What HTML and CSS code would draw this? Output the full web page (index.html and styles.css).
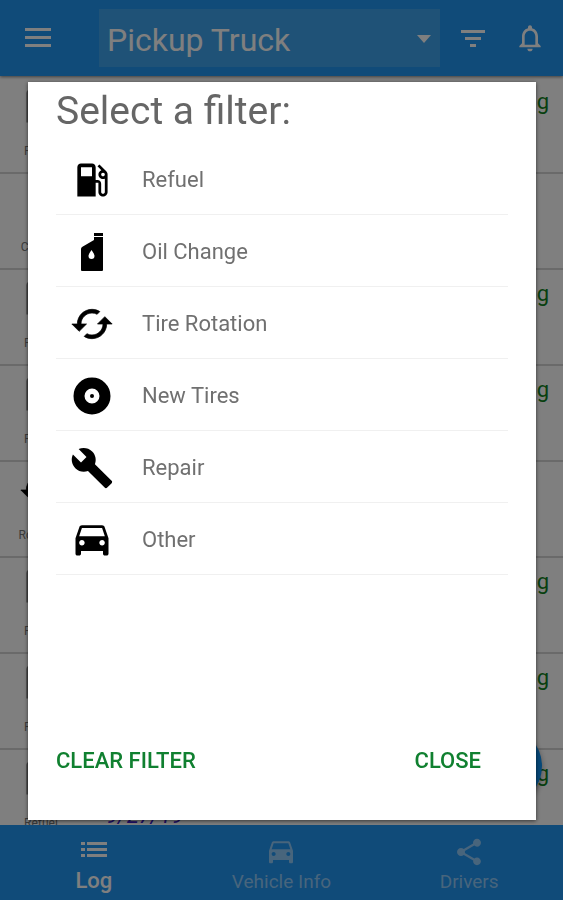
FILE: index.html
```
<!doctype html>
<html lang="en">
<head>
    <meta charset="utf-8">
    <meta name="viewport" content="width=device-width, initial-scale=1">
    <title>Pickup Truck</title>
    <link rel="stylesheet" href="styles.css">
</head>

<body>
    <!-- shared icon shapes -->
    <svg class="sprite" aria-hidden="true">
      <symbol id="icon-car" viewBox="0 0 24 24">
        <path d="M18.920 5.010C18.720 4.420 18.160 4 17.500 4h-11c-.66 0-1.210.42-1.420 1.010L3 11v8.500c0 .55.45 1 1 1h1c.55 0 1-.45 1-1V18h12v1.500c0 .55.45 1 1 1h1c.55 0 1-.45 1-1V11l-2.080-5.990zM6.500 15c-.83 0-1.500-.67-1.500-1.500S5.670 12 6.500 12s1.500.67 1.500 1.500S7.330 15 6.500 15zm11 0c-.83 0-1.500-.67-1.500-1.500s.67-1.500 1.500-1.500 1.500.67 1.500 1.500-.67 1.500-1.500 1.500zM5 10l1.500-4.500h11L19 10H5z"/>
      </symbol>
      <symbol id="icon-gas" viewBox="0 0 24 24">
        <path d="M19.770 7.230l.01-.01-3.720-3.720L15 4.560l2.110 2.110c-.94.36-1.610 1.260-1.610 2.330 0 1.380 1.120 2.500 2.500 2.500.36 0 .69-.08 1-.21v7.210c0 .55-.45 1-1 1s-1-.45-1-1V14c0-1.100-.9-2-2-2h-1V5c0-1.100-.9-2-2-2H6c-1.100 0-2 .9-2 2v16h10v-7.500h1.500v5c0 1.380 1.120 2.500 2.500 2.500s2.500-1.120 2.500-2.500V9c0-.69-.28-1.320-.73-1.770zM12 10H6V5h6v5zm6 0c-.55 0-1-.45-1-1s.45-1 1-1 1 .45 1 1-.45 1-1 1z"/>
      </symbol>
      <symbol id="icon-oil" viewBox="0 0 44 44">
        <path fill-rule="evenodd" d="M24 3h9v3h-9zM24 7h9v33q0 1-1 1H12q-1 0-1-1V19q0-1 1-2l12-7zM21.500 20q-3 4-3 6a3 3 0 0 0 6 0q0-2-3-6z"/>
      </symbol>
      <symbol id="icon-rotate" viewBox="0 0 24 24">
        <path stroke="currentColor" stroke-width=".4" stroke-linejoin="round" d="M19 8l-4 4h3c0 3.310-2.690 6-6 6-1.010 0-1.970-.25-2.800-.7l-1.460 1.460C8.970 19.540 10.430 20 12 20c4.420 0 8-3.580 8-8h3l-4-4zM6 12c0-3.310 2.690-6 6-6 1.010 0 1.970.25 2.800.7l1.460-1.460C15.030 4.460 13.570 4 12 4c-4.420 0-8 3.580-8 8H1l4 4 4-4H6z"/>
      </symbol>
    </svg>

    <div class="app">
      <header class="toolbar">
        <button class="icon-btn menu" aria-label="Menu">
          <svg width="26" height="20" viewBox="0 0 26 20"><path d="M0 0h26v3H0zM0 8h26v3H0zM0 16h26v3H0z"/></svg>
        </button>
        <div class="vehicle">
          <select aria-label="Vehicle">
            <option>Pickup Truck</option>
          </select>
          <svg class="caret" width="14" height="8" viewBox="0 0 14 8"><path d="M0 0h14L7 8z"/></svg>
        </div>
        <button class="icon-btn" aria-label="Filter">
          <svg width="24" height="18" viewBox="0 0 24 18"><path d="M0 1h24v3H0zM4 8h16v3H4zM9 15h6v3H9z"/></svg>
        </button>
        <button class="icon-btn" aria-label="Notifications">
          <svg width="32" height="32" viewBox="0 0 24 24"><path d="M12 22c1.100 0 2-.9 2-2h-4c0 1.100.9 2 2 2zm6-6v-5c0-3.070-1.630-5.640-4.500-6.320V4c0-.83-.67-1.500-1.500-1.500s-1.500.67-1.500 1.500v.68C7.640 5.360 6 7.920 6 11v5l-2 2v1h16v-1l-2-2zm-2 1H8v-6c0-2.480 1.510-4.500 4-4.500s4 2.020 4 4.500v6z"/></svg>
        </button>
      </header>

      <main class="log">
        <div class="entry">
          <div class="kind"><svg><use href="#icon-gas"/></svg>Refuel</div>
          <div class="mpg">mpg</div>
        </div>
        <div class="entry">
          <div class="kind">Change</div>
        </div>
        <div class="entry">
          <div class="kind"><svg><use href="#icon-gas"/></svg>Refuel</div>
          <div class="mpg">mpg</div>
        </div>
        <div class="entry">
          <div class="kind"><svg><use href="#icon-gas"/></svg>Refuel</div>
          <div class="mpg">mpg</div>
        </div>
        <div class="entry">
          <div class="kind dark"><svg><use href="#icon-rotate"/></svg>Rotation</div>
        </div>
        <div class="entry">
          <div class="kind"><svg><use href="#icon-gas"/></svg>Refuel</div>
          <div class="mpg">mpg</div>
        </div>
        <div class="entry">
          <div class="kind"><svg><use href="#icon-gas"/></svg>Refuel</div>
          <div class="mpg">mpg</div>
        </div>
        <div class="entry">
          <div class="kind"><svg><use href="#icon-gas"/></svg>Refuel</div>
          <div class="date">9/27/19</div>
          <div class="mpg">mpg</div>
        </div>
        <button class="fab" aria-label="Add entry"></button>
      </main>

      <nav class="tabs">
        <a href="#log" class="active">
          <svg width="26" height="26" viewBox="0 0 26 26"><path d="M0 5h4v3H0zM6 5h20v3H6zM0 11h4v3H0zM6 11h20v3H6zM0 17h4v3H0zM6 17h20v3H6z"/></svg>
          Log
        </a>
        <a href="#vehicle">
          <svg width="32" height="32"><use href="#icon-car"/></svg>
          Vehicle Info
        </a>
        <a href="#drivers">
          <svg width="32" height="32" viewBox="0 0 24 24"><path d="M18 16.080c-.76 0-1.440.3-1.960.77L8.910 12.700c.05-.23.09-.46.09-.7s-.04-.47-.09-.7l7.050-4.110c.54.5 1.250.81 2.040.81 1.660 0 3-1.340 3-3s-1.340-3-3-3-3 1.340-3 3c0 .24.04.47.09.7L8.040 9.810C7.500 9.310 6.790 9 6 9c-1.660 0-3 1.340-3 3s1.340 3 3 3c.79 0 1.500-.31 2.040-.81l7.120 4.160c-.05.21-.08.43-.08.65 0 1.610 1.310 2.920 2.920 2.920s2.920-1.310 2.920-2.920-1.310-2.920-2.920-2.920z"/></svg>
          Drivers
        </a>
      </nav>
    </div>

    <div class="overlay">
      <div class="dialog" role="dialog" aria-labelledby="dialog-title">
        <h1 id="dialog-title">Select a filter:</h1>
        <ul class="filters">
          <li><button><svg><use href="#icon-gas"/></svg>Refuel</button></li>
          <li><button><svg><use href="#icon-oil"/></svg>Oil Change</button></li>
          <li><button><svg><use href="#icon-rotate"/></svg>Tire Rotation</button></li>
          <li><button><svg viewBox="0 0 44 44"><circle cx="22" cy="22" r="13" fill="none" stroke="#000" stroke-width="11"/><circle cx="22" cy="22" r="2"/></svg>New Tires</button></li>
          <li><button><svg viewBox="0 0 24 24"><path d="M22.700 19l-9.100-9.100c.9-2.300.4-5-1.500-6.900-2-2-5-2.400-7.400-1.300L9 6 6 9 1.600 4.700C.4 7.100.9 10.100 2.900 12.100c1.900 1.900 4.600 2.400 6.900 1.500l9.100 9.100c.4.4 1 .4 1.400 0l2.300-2.300c.5-.4.5-1.100.1-1.400z"/></svg>Repair</button></li>
          <li><button><svg><use href="#icon-car"/></svg>Other</button></li>
        </ul>
        <div class="actions">
          <button>CLEAR FILTER</button>
          <button>CLOSE</button>
        </div>
      </div>
    </div>
</body>
</html>
```
FILE: styles.css
```
* {
    box-sizing: border-box;
}

body {
    margin: 0;
    font-family: Roboto, sans-serif;
    color: #000;
}

button, select {
    font-family: inherit;
    border: 0;
    padding: 0;
    background: none;
}

svg {
    display: block;
    fill: currentColor;
}

.sprite {
    display: none;
}

.app {
    height: 100vh;
    display: flex;
    flex-direction: column;
    background: #fff;
}

/* toolbar */
.toolbar {
    height: 76px;
    flex: none;
    display: flex;
    align-items: center;
    padding: 0 17px 0 25px;
    background: #2196f3;
    color: #fff;
    box-shadow: 0 1px 3px rgba(0, 0, 0, .5);
    position: relative;
}

.icon-btn {
    width: 32px;
    display: flex;
    justify-content: center;
    color: #fff;
}

.icon-btn + .icon-btn {
    margin-left: 25px;
}

.menu {
    width: 26px;
}

.vehicle {
    position: relative;
    flex: 1;
    margin: 0 17px 0 48px;
}

.vehicle select {
    display: block;
    width: 100%;
    height: 58px;
    padding: 4px 0 0 8px;
    appearance: none;
    background: #3fa5ee;
    color: #fff;
    font-size: 32px;
}

.caret {
    position: absolute;
    right: 9px;
    top: 26px;
    pointer-events: none;
}

/* log */
.log {
    position: relative;
    flex: 1;
    overflow: hidden;
    padding-top: 2px;
}

.entry {
    height: 96px;
    display: flex;
    align-items: flex-start;
    padding: 0 14px 0 6px;
    border-bottom: 2px solid #d4d4d4;
}

.kind {
    width: 70px;
    height: 81px;
    display: flex;
    flex-direction: column;
    align-items: center;
    justify-content: flex-end;
    color: #777;
    font-size: 12px;
    line-height: 16px;
}

.kind svg {
    width: 44px;
    height: 44px;
    margin-bottom: 15px;
    color: #888;
}

.kind.dark svg {
    color: #000;
}

.date {
    margin: 54px 0 0 30px;
    font-size: 22px;
    font-style: italic;
    line-height: 24px;
    color: #4020d0;
}

.mpg {
    margin: 11px 0 0 auto;
    font-size: 22px;
    line-height: 26px;
    color: #108020;
}

.fab {
    position: absolute;
    right: 21px;
    bottom: 19px;
    width: 80px;
    height: 80px;
    border-radius: 50%;
    background: #0d90f0;
    box-shadow: 0 3px 6px rgba(0, 0, 0, .4);
}

/* bottom tabs */
.tabs {
    height: 75px;
    flex: none;
    display: grid;
    grid-template-columns: repeat(3, 1fr);
    background: #2196f3;
}

.tabs a {
    display: flex;
    flex-direction: column;
    align-items: center;
    justify-content: space-between;
    padding: 11px 0 6px;
    color: #90caf9;
    font-size: 19px;
    line-height: 24px;
    text-decoration: none;
}

.tabs a.active {
    padding: 12px 0 7px;
    color: #fff;
    font-size: 22px;
    font-weight: 500;
}

/* filter dialog */
.overlay {
    position: fixed;
    inset: 0;
    display: flex;
    padding: 82px 27px 80px 28px;
    background: rgba(0, 0, 0, .5);
}

.dialog {
    flex: 1;
    display: flex;
    flex-direction: column;
    padding: 5px 28px 40px;
    background: #fff;
    box-shadow: 0 1px 4px rgba(0, 0, 0, .6);
}

.dialog h1 {
    margin: 0 0 8px;
    font-size: 39px;
    font-weight: 400;
    line-height: 48px;
    color: #666;
}

.filters {
    list-style: none;
    margin: 0;
    padding: 0;
}

.filters li {
    border-bottom: 1px solid #f0f0f0;
}

.filters button {
    width: 100%;
    height: 71px;
    display: flex;
    align-items: center;
    gap: 28px;
    padding: 2px 14px 0;
    color: #707070;
    font-size: 22px;
    text-align: left;
}

.filters svg {
    width: 44px;
    height: 44px;
    color: #000;
}

.actions {
    display: flex;
    justify-content: space-between;
    margin-top: auto;
    padding-right: 27px;
}

.actions button {
    color: #108030;
    font-size: 22px;
    font-weight: 500;
    line-height: 38px;
}
```
